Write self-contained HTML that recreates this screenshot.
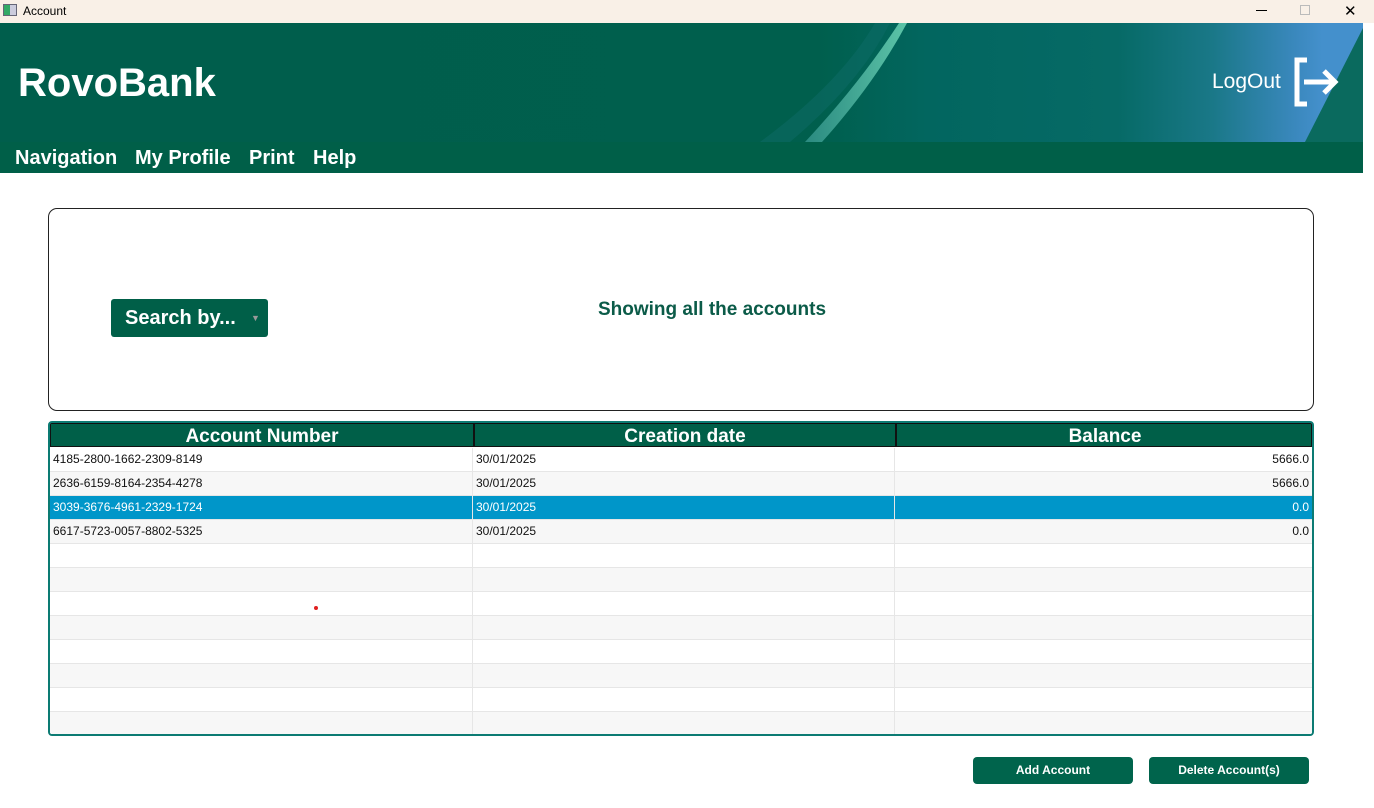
<!DOCTYPE html>
<html><head><meta charset="utf-8"><style>
*{margin:0;padding:0;box-sizing:border-box}
body{width:1374px;height:808px;background:#fff;font-family:"Liberation Sans",Arial,sans-serif;position:relative;overflow:hidden}
.tb{position:absolute;left:0;top:0;width:1374px;height:23px;background:#f9f0e7;font-size:12px;color:#000}
.hdr{position:absolute;left:0;top:23px;width:1363px;height:119px;overflow:hidden;background:linear-gradient(90deg,#005e4c 0%,#005f4d 60%,#02665f 68%,#066a66 82%,#1a7888 89%,#3a88bd 95%,#4490cc 97%)}
.nav{position:absolute;left:0;top:142px;width:1363px;height:31px;background:#005f48}
.nav span{position:absolute;top:5px;color:#fff;font-weight:bold;font-size:20px}
.box{position:absolute;left:48px;top:208px;width:1266px;height:203px;border:1px solid #222;border-radius:9px}
.tbl{position:absolute;left:48px;top:421px;width:1266px;height:315px;border:2px solid #0c7b73;border-radius:4px;overflow:hidden}
.row{position:absolute;left:0;width:1262px;height:24px;font-size:12px;border-bottom:1px solid #e6e6e6}
.row div{position:absolute;top:0;height:23px;line-height:23px;padding:0 3px}
.btn{position:absolute;top:756px;width:160px;height:27px;background:#00644c;border-radius:4px;color:#fff;font-weight:bold;font-size:12px;text-align:center;line-height:27px}
</style></head><body>
<div class="tb"><span style="position:absolute;left:3px;top:4px;width:14px;height:12px;border:1px solid #667;background:linear-gradient(90deg,#3a6 0 50%,#ccd 50%)"></span><span style="position:absolute;left:23px;top:4px">Account</span>
<span style="position:absolute;left:1256px;top:10px;width:11px;height:1px;background:#000"></span>
<span style="position:absolute;left:1300px;top:5px;width:10px;height:10px;border:1px solid #bbb"></span>
<span style="position:absolute;left:1344px;top:2px;font-size:15px">✕</span></div>
<div class="hdr">
<svg width="1363" height="119" style="position:absolute;left:0;top:0">
<defs><linearGradient id="g1" x1="0" y1="0" x2="1" y2="0"><stop offset="0" stop-color="#2a8a80"/><stop offset="1" stop-color="#5cc4a8"/></linearGradient></defs>
<path d="M790 119 Q860 60 890 0 L875 0 Q840 60 760 119Z" fill="#0d6c68" opacity=".5"/>
<path d="M822 119 Q875 60 907 0 L899 0 Q860 60 805 119Z" fill="url(#g1)"/>
<path d="M1305 119 L1363 5 L1363 119Z" fill="#0a6a5e"/>
</svg>
<div style="position:absolute;left:18px;top:38px;color:#fff;font-weight:bold;font-size:40px">RovoBank</div>
<div style="position:absolute;left:1212px;top:47px;color:#fff;font-size:21px">LogOut</div>
<svg width="50" height="52" style="position:absolute;left:1292px;top:34px" fill="none" stroke="#fff" stroke-width="5">
<path d="M15 3 H5 V47 H15"/><path d="M12 25 H42 M32 14 L43 25 L32 36"/></svg>
</div>
<div class="nav"><span style="left:15px">Navigation</span><span style="left:135px">My Profile</span><span style="left:249px">Print</span><span style="left:313px">Help</span></div>
<div class="box">
<div style="position:absolute;left:62px;top:90px;width:157px;height:38px;background:#005f48;border-radius:3px;color:#fff;font-weight:bold;font-size:20px;line-height:38px;padding-left:14px">Search by...<span style="position:absolute;left:140px;top:0;font-size:9px;color:#999">▼</span></div>
<div style="position:absolute;left:543px;width:240px;top:90px;text-align:center;color:#0b5b48;font-weight:bold;font-size:19px">Showing all the accounts</div>
</div>
<div class="tbl">
<div style="position:absolute;left:0;top:0;width:1262px;height:24px;background:#005f48;border:1px solid #111;color:#fff;font-weight:bold;font-size:19px;line-height:26px">
<div style="position:absolute;left:0;width:422px;text-align:center">Account Number</div>
<div style="position:absolute;left:422px;width:422px;text-align:center;border-left:2px solid #111;height:22px">Creation date</div>
<div style="position:absolute;left:844px;width:418px;text-align:center;border-left:2px solid #111;height:22px">Balance</div>
</div>
<div id="rows"></div>
</div>
<div style="position:absolute;left:314px;top:606px;width:4px;height:4px;border-radius:2px;background:#e02020"></div>
<div class="btn" style="left:973px;top:757px">Add Account</div>
<div class="btn" style="left:1149px;top:757px">Delete Account(s)</div>
<script>
var d=[["4185-2800-1662-2309-8149","30/01/2025","5666.0"],["2636-6159-8164-2354-4278","30/01/2025","5666.0"],["3039-3676-4961-2329-1724","30/01/2025","0.0"],["6617-5723-0057-8802-5325","30/01/2025","0.0"]];
var h="";for(var i=0;i<12;i++){var r=d[i]||["","",""];var sel=i==2;var bg=sel?"#0096c9":(i%2?"#f7f7f7":"#fff");var c=sel?"#fff":"#111";
h+='<div class="row" style="top:'+(25+i*24)+'px;background:'+bg+';color:'+c+'"><div style="left:0;width:422px">'+r[0]+'</div><div style="left:422px;width:422px;border-left:1px solid #e6e6e6">'+r[1]+'</div><div style="left:844px;width:418px;border-left:1px solid #e6e6e6;text-align:right">'+r[2]+'</div></div>';}
document.getElementById("rows").innerHTML=h;
</script>
</body></html>
